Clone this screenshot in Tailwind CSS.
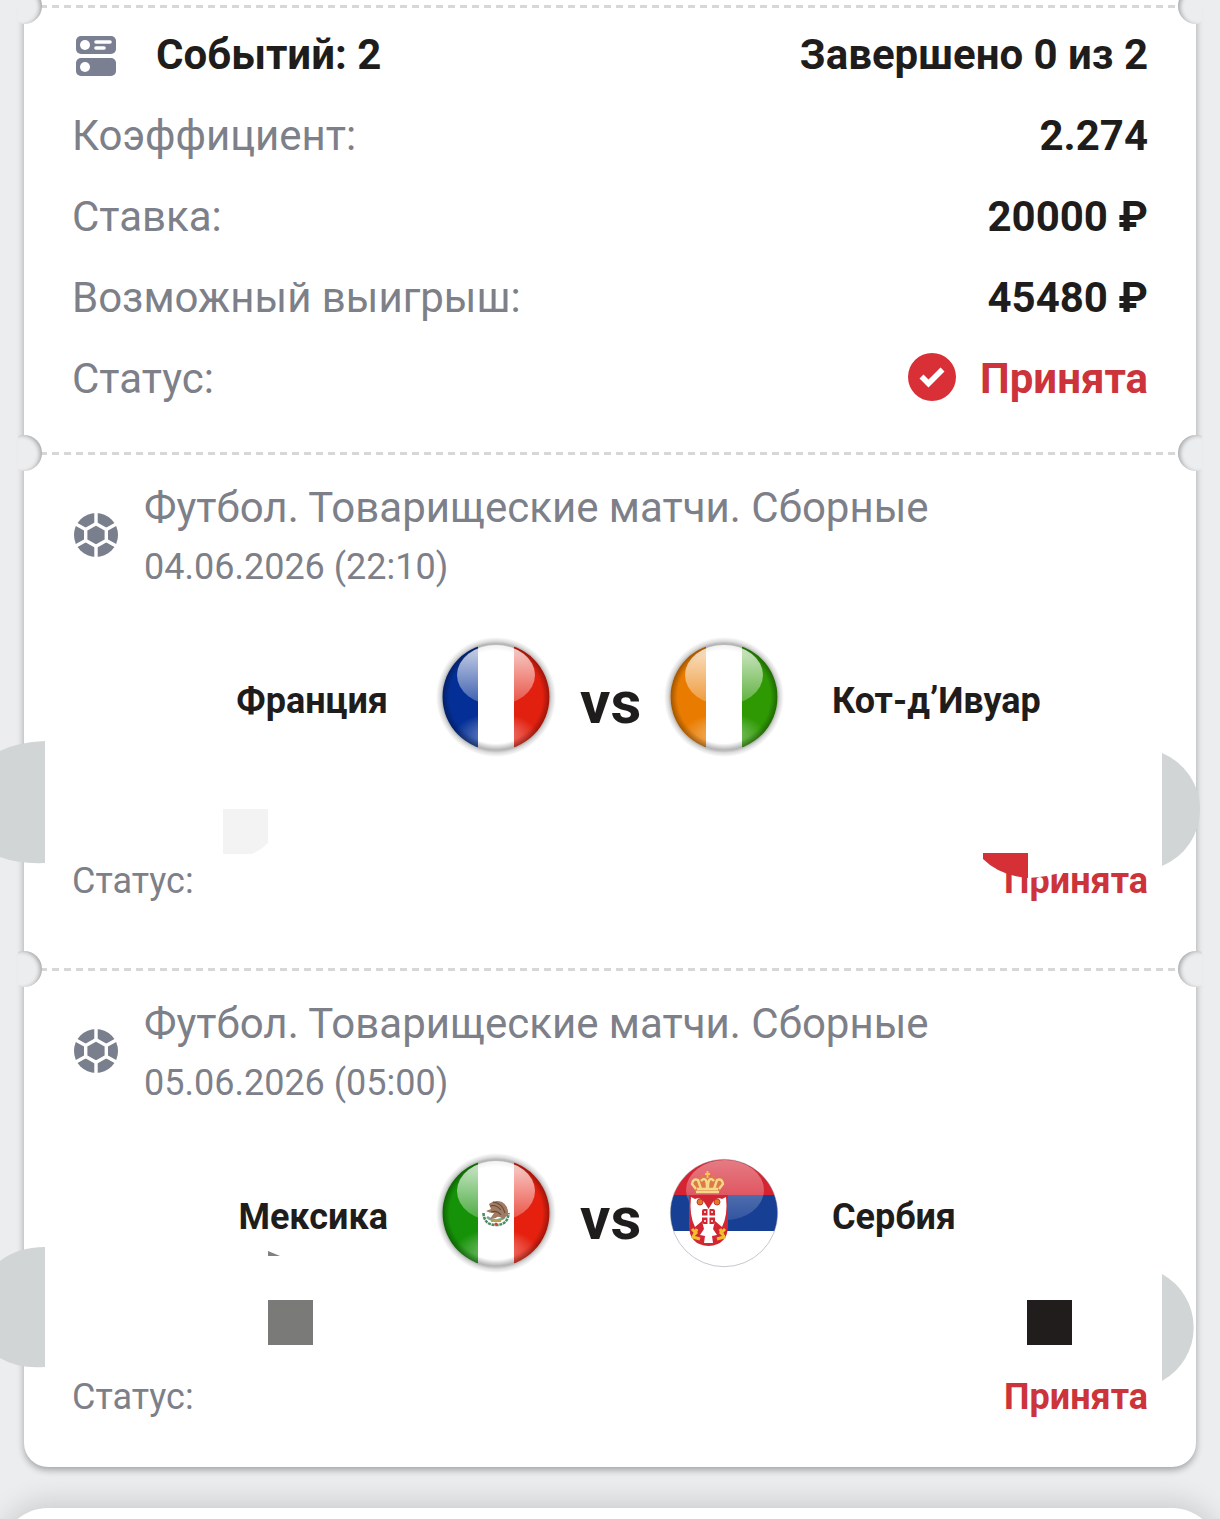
<!DOCTYPE html>
<html lang="ru">
<head>
<meta charset="utf-8">
<meta name="viewport" content="width=device-width, initial-scale=1">
<title>Купон: Событий 2</title>
<script src="https://cdn.jsdelivr.net/npm/@tailwindcss/browser@4"></script>
</head>
<body class="bg-[#ebedef] font-['Roboto',sans-serif] text-[#1f1d1c]">

<!-- Shared gradients and symbols -->
<svg class="absolute size-0" aria-hidden="true">
  <defs>
    <clipPath id="ball"><circle cx="60" cy="60" r="53.5"/></clipPath>
    <linearGradient id="gloss" x1="0" y1="0" x2="0" y2="1">
      <stop offset="0" stop-color="#fff" stop-opacity=".8"/>
      <stop offset="1" stop-color="#fff" stop-opacity=".22"/>
    </linearGradient>
    <linearGradient id="glossSoft" x1="0" y1="0" x2="0" y2="1">
      <stop offset="0" stop-color="#fff" stop-opacity=".4"/>
      <stop offset="1" stop-color="#fff" stop-opacity=".12"/>
    </linearGradient>
    <radialGradient id="edge">
      <stop offset=".86" stop-color="#000" stop-opacity="0"/>
      <stop offset="1" stop-color="#000" stop-opacity=".34"/>
    </radialGradient>
    <radialGradient id="glow">
      <stop offset="0" stop-color="#fff" stop-opacity=".5"/>
      <stop offset="1" stop-color="#fff" stop-opacity="0"/>
    </radialGradient>
    <radialGradient id="halo">
      <stop offset=".86" stop-color="#000" stop-opacity=".42"/>
      <stop offset=".93" stop-color="#000" stop-opacity=".14"/>
      <stop offset="1" stop-color="#000" stop-opacity="0"/>
    </radialGradient>
    <symbol id="shine" viewBox="0 0 120 120">
      <g clip-path="url(#ball)">
        <ellipse cx="60" cy="98" rx="42" ry="22" fill="url(#glow)"/>
        <circle cx="60" cy="60" r="54" fill="url(#edge)"/>
        <ellipse cx="60" cy="38" rx="39" ry="30" fill="url(#gloss)"/>
      </g>
    </symbol>
    <symbol id="football" viewBox="0 0 44 44">
      <circle cx="22" cy="22" r="22" fill="#7a7f8d"/>
      <g fill="none" stroke="#fff" stroke-width="3.4">
        <path d="M22 10.800 32.300 16.500V27.500L22 33.200 11.700 27.500V16.500Z"/>
        <path d="M22 10.800V-1M22 33.200V45M32.300 16.500 44 10M11.700 16.500 0 10M32.300 27.500 44 34M11.700 27.500 0 34"/>
      </g>
    </symbol>
  </defs>
</svg>

<main class="flex min-h-screen flex-col overflow-hidden">
  <article class="relative mx-6 rounded-b-3xl bg-white pt-[5px] shadow-[0_3px_7px_rgba(0,0,0,0.32)]">

    <div class="relative mx-4 h-[3px] bg-[repeating-linear-gradient(90deg,#d6d7d9_0_7px,transparent_7px_12px)]" aria-hidden="true">
      <span class="absolute -left-[34px] -top-[17px] size-9 rounded-full bg-[#ebedef] shadow-[inset_-3px_1px_4px_-1px_rgba(0,0,0,0.3)] [clip-path:inset(0_0_0_12px)]"></span>
      <span class="absolute -right-[34px] -top-[17px] size-9 rounded-full bg-[#ebedef] shadow-[inset_3px_1px_4px_-1px_rgba(0,0,0,0.3)] [clip-path:inset(0_12px_0_0)]"></span>
    </div>

    <section class="px-12 pb-[33px] pt-[6px] text-[42px] leading-[81px]">
      <h2 class="flex items-center justify-between font-bold">
        <span class="flex items-center gap-10">
          <svg class="ml-1 mt-[2px] size-10" viewBox="0 0 40 40" aria-hidden="true">
            <rect width="40" height="18" rx="5" fill="#7a7f92"/>
            <rect y="22" width="40" height="18" rx="5" fill="#7a7f92"/>
            <circle cx="9" cy="9" r="5" fill="#fff"/><circle cx="9" cy="31" r="5" fill="#fff"/>
            <path d="M20 6H34M20 12H28" stroke="#fff" stroke-width="3.6" stroke-linecap="round"/>
          </svg>
          Событий: 2
        </span>
        <span>Завершено 0 из 2</span>
      </h2>
      <dl>
        <div class="flex justify-between"><dt class="text-[#7d8089]">Коэффициент:</dt><dd class="font-bold">2.274</dd></div>
        <div class="flex justify-between"><dt class="text-[#7d8089]">Ставка:</dt><dd class="font-bold">20000 ₽</dd></div>
        <div class="flex justify-between"><dt class="text-[#7d8089]">Возможный выигрыш:</dt><dd class="font-bold">45480 ₽</dd></div>
        <div class="flex justify-between"><dt class="text-[#7d8089]">Статус:</dt>
          <dd class="flex items-center gap-6 font-bold text-[#cc333a]">
            <svg class="mb-1 size-12" viewBox="0 0 48 48" aria-hidden="true">
              <circle cx="24" cy="24" r="24" fill="#d83036"/>
              <path d="M13.5 23.5 20.5 30.5 34.5 16.5" fill="none" stroke="#fff" stroke-width="5.6"/>
            </svg>
            Принята
          </dd>
        </div>
      </dl>
    </section>

    <div class="relative mx-4 h-[3px] bg-[repeating-linear-gradient(90deg,#d6d7d9_0_7px,transparent_7px_12px)]" aria-hidden="true">
      <span class="absolute -left-[34px] -top-[17px] size-9 rounded-full bg-[#ebedef] shadow-[inset_-3px_1px_4px_-1px_rgba(0,0,0,0.3)] [clip-path:inset(0_0_0_12px)]"></span>
      <span class="absolute -right-[34px] -top-[17px] size-9 rounded-full bg-[#ebedef] shadow-[inset_3px_1px_4px_-1px_rgba(0,0,0,0.3)] [clip-path:inset(0_12px_0_0)]"></span>
    </div>

    <section class="relative h-[513px] px-12 pt-6">
      <header class="flex items-start gap-[26px] text-[#7d8089]">
        <svg class="ml-[2px] mt-[34px] size-11 shrink-0" aria-hidden="true"><use href="#football"/></svg>
        <div>
          <h3 class="text-[42px] leading-[58px]">Футбол. Товарищеские матчи. Сборные</h3>
          <p class="text-[36px] leading-[60px]"><time datetime="2026-06-04T22:10">04.06.2026 (22:10)</time></p>
        </div>
      </header>
      <div class="mt-10 grid grid-cols-[1fr_auto_1fr] items-center gap-12 text-[36px] font-bold">
        <span class="pt-2 text-right">Франция</span>
        <div class="flex items-center gap-6">
          <svg class="size-[120px]" viewBox="0 0 120 120" role="img" aria-label="Флаг Франции">
            <circle cx="60" cy="60" r="60" fill="url(#halo)"/>
            <g clip-path="url(#ball)">
              <path fill="#fff" d="M0 0H120V120H0Z"/><path fill="#042f97" d="M0 0H42V120H0Z"/><path fill="#e2200f" d="M78 0H120V120H78Z"/>
            </g>
            <use href="#shine"/>
          </svg>
          <span class="w-[60px] pt-3 text-center text-[60px] leading-none">vs</span>
          <svg class="size-[120px]" viewBox="0 0 120 120" role="img" aria-label="Флаг Кот-д’Ивуара">
            <circle cx="60" cy="60" r="60" fill="url(#halo)"/>
            <g clip-path="url(#ball)">
              <path fill="#fff" d="M0 0H120V120H0Z"/><path fill="#e97c00" d="M0 0H42V120H0Z"/><path fill="#2e9903" d="M78 0H120V120H78Z"/>
            </g>
            <use href="#shine"/>
          </svg>
        </div>
        <span class="pt-2">Кот-д’Ивуар</span>
      </div>
      <dl class="mt-[97px] flex justify-between text-[36px] leading-[54px]">
        <dt class="text-[#7d8089]">Статус:</dt><dd class="font-bold text-[#cc333a]">Принята</dd>
      </dl>

      <!-- Loose decorative shapes over the ticket -->
      <svg class="absolute -left-6 top-[286px] h-[123px] w-[45px]" viewBox="0 0 45 123" aria-hidden="true"><path fill="#d1d5d6" d="M45 0Q18 1 0 10V116Q18 123 45 122Z"/></svg>
      <svg class="absolute -right-[5px] top-[298px] h-[113px] w-[39px]" viewBox="0 0 39 113" aria-hidden="true"><path fill="#d1d5d6" d="M0 0A61 61 0 0 1 0 113Z"/></svg>
      <svg class="absolute left-[199px] top-[354px] size-[45px]" viewBox="0 0 45 45" aria-hidden="true"><path fill="#f3f3f3" d="M0 0H45V34Q38 41 29 45H0Z"/></svg>
      <svg class="absolute right-[133px] top-[397px] h-[28px] w-[80px]" viewBox="0 0 80 28" aria-hidden="true"><path fill="#fff" d="M45 0H80V20Q64 25 45 26Z"/><path fill="#d43036" d="M0 1H45V26Q17 24 0 7Z"/></svg>
    </section>

    <div class="relative mx-4 h-[3px] bg-[repeating-linear-gradient(90deg,#d6d7d9_0_7px,transparent_7px_12px)]" aria-hidden="true">
      <span class="absolute -left-[34px] -top-[17px] size-9 rounded-full bg-[#ebedef] shadow-[inset_-3px_1px_4px_-1px_rgba(0,0,0,0.3)] [clip-path:inset(0_0_0_12px)]"></span>
      <span class="absolute -right-[34px] -top-[17px] size-9 rounded-full bg-[#ebedef] shadow-[inset_3px_1px_4px_-1px_rgba(0,0,0,0.3)] [clip-path:inset(0_12px_0_0)]"></span>
    </div>

    <section class="relative h-[496px] px-12 pt-6">
      <header class="flex items-start gap-[26px] text-[#7d8089]">
        <svg class="ml-[2px] mt-[34px] size-11 shrink-0" aria-hidden="true"><use href="#football"/></svg>
        <div>
          <h3 class="text-[42px] leading-[58px]">Футбол. Товарищеские матчи. Сборные</h3>
          <p class="text-[36px] leading-[60px]"><time datetime="2026-06-05T05:00">05.06.2026 (05:00)</time></p>
        </div>
      </header>
      <div class="mt-10 grid grid-cols-[1fr_auto_1fr] items-center gap-12 text-[36px] font-bold">
        <span class="pt-2 text-right">Мексика</span>
        <div class="flex items-center gap-6">
          <svg class="size-[120px]" viewBox="0 0 120 120" role="img" aria-label="Флаг Мексики">
            <circle cx="60" cy="60" r="60" fill="url(#halo)"/>
            <g clip-path="url(#ball)">
              <path fill="#fff" d="M0 0H120V120H0Z"/><path fill="#159207" d="M0 0H42V120H0Z"/><path fill="#e5200f" d="M78 0H120V120H78Z"/>
            </g>
            <use href="#shine"/>
            <path d="M47.500 60Q48 72 60 72T72.500 60" fill="none" stroke="#4d8b62" stroke-width="2.6" stroke-dasharray="3 .8"/>
            <path d="M51 64Q60 71 69 64" fill="none" stroke="#7aa79a" stroke-width="2.4"/>
            <path d="M53 51Q59 46 66 49Q73 53 72 62L67 66Q62 62 60 65L54 66 58 60Q53 60 50 58L55 56Z" fill="#a17b62"/>
            <path d="M54 53Q60 51 65 57M57 49Q66 50 69 60M55 59Q61 57 65 62" fill="none" stroke="#644a3b" stroke-width="1.1"/>
            <path d="M55 68H65" stroke="#b6a24a" stroke-width="2"/><circle cx="60" cy="71" r="1.6" fill="#c84b35"/>
          </svg>
          <span class="w-[60px] pt-3 text-center text-[60px] leading-none">vs</span>
          <svg class="size-[120px]" viewBox="0 0 120 120" role="img" aria-label="Флаг Сербии">
            <g clip-path="url(#ball)">
              <path fill="#fff" d="M0 0H120V120H0Z"/><path fill="#d52331" d="M0 0H120V42H0Z"/><path fill="#173f94" d="M0 42H120V78H0Z"/>
              <ellipse cx="61" cy="37" rx="39" ry="30" fill="url(#glossSoft)"/>
            </g>
            <circle cx="60" cy="60" r="53.7" fill="none" stroke="#7c8494" stroke-opacity=".45"/>
            <path d="M25 42H64V72Q64 92 44.500 93Q25 92 25 72Z" fill="#d22732"/>
            <path d="M42 52Q37 43 31 46L27 44Q25 62 31 74L38 68 40 76 36 82 41 83 40 90H49L48 83 53 82 49 76 51 68 58 74Q64 62 62 44L58 46Q52 43 47 52L44.500 56Z" fill="#fff"/>
            <rect x="38" y="56" width="13" height="15" rx="2" fill="#d22732"/>
            <path d="M44.500 56V71M38 63.500H51" stroke="#fff" stroke-width="2"/>
            <path d="M40 59H42M40 68H42M47 59H49M47 68H49" stroke="#fff" stroke-width="1.600"/>
            <circle cx="36" cy="49" r="3" fill="#e07a28" stroke="#c9372d"/><circle cx="53" cy="49" r="3" fill="#e07a28" stroke="#c9372d"/>
            <path d="M28 76 33 81M33 76 29 84 36 86M61 76 56 81M56 76 60 84 53 86" fill="none" stroke="#f0c02c" stroke-width="3"/>
            <path d="M32 40 28 31Q28 25 34 26L38 22 43 25 49 22 53 26 59 25 59 31L55 40Z" fill="#dd7a48"/>
            <path d="M32 39H55M32 36 28 31Q29 25 34 27L37 36M37 28Q43 22 43 35M50 28Q44 22 44 35M55 36 59 31Q58 25 53 27L50 36M33 36H54" fill="none" stroke="#f5d98a" stroke-width="2.400"/>
            <path d="M43.500 18V25M41 21H46" stroke="#f1cc4b" stroke-width="1.800"/>
          </svg>
        </div>
        <span class="pt-2">Сербия</span>
      </div>
      <dl class="mt-[97px] flex justify-between text-[36px] leading-[54px]">
        <dt class="text-[#7d8089]">Статус:</dt><dd class="font-bold text-[#cc333a]">Принята</dd>
      </dl>

      <!-- Loose decorative shapes over the ticket -->
      <svg class="absolute -left-6 top-[276px] h-[121px] w-[45px]" viewBox="0 0 45 121" aria-hidden="true"><path fill="#d1d5d6" d="M45 0Q18 0 0 14V111Q18 122 45 120Z"/></svg>
      <svg class="absolute right-[2px] top-[303px] h-[107px] w-[32px]" viewBox="0 0 32 107" aria-hidden="true"><path fill="#d1d5d6" d="M0 0A61 61 0 0 1 0 107Z"/></svg>
      <svg class="absolute left-[244px] top-[280px] h-[5px] w-[12px]" viewBox="0 0 12 5" aria-hidden="true"><path fill="#81817f" d="M0 0 12 5H0Z"/></svg>
      <span class="absolute left-[244px] top-[329px] size-[45px] bg-[#7a7a78]" aria-hidden="true"></span>
      <span class="absolute right-[124px] top-[329px] size-[45px] bg-[#211d1c]" aria-hidden="true"></span>
    </section>
  </article>

  <!-- Top edge of the next sheet -->
  <div class="h-[52px] overflow-hidden pt-[41px]">
    <div class="h-24 rounded-t-[48px] bg-white shadow-[0_-6px_28px_rgba(0,0,0,0.14)]"></div>
  </div>
</main>
</body>
</html>
